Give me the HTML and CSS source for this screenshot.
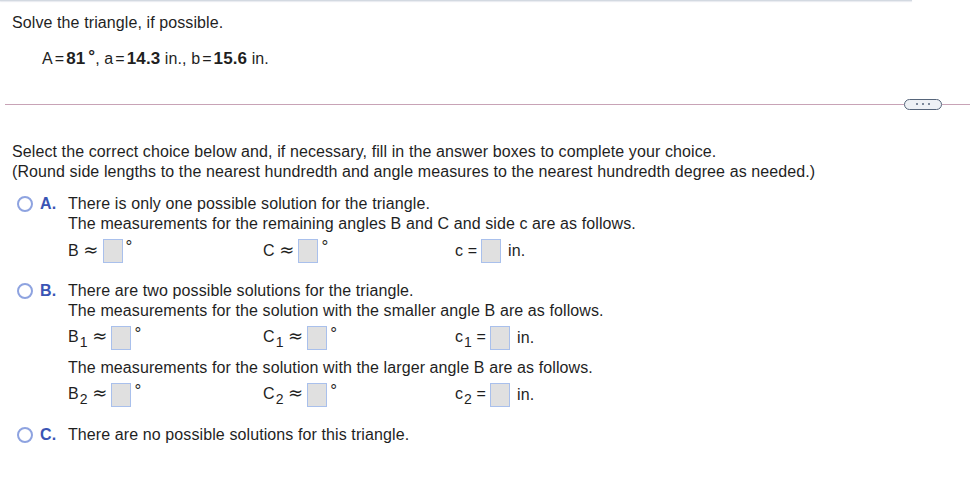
FILE: index.html
```html
<!DOCTYPE html>
<html>
<head>
<meta charset="utf-8">
<link rel="stylesheet" href="styles.css">
</head>
<body>
<div class="page">
  <div class="topline"></div>
  <div class="question">
    <div class="prompt">Solve the triangle, if possible.</div>
    <div class="given">A<span class="eq">=</span><b>81</b><b class="gdeg">°</b>, a<span class="eq">=</span><b>14.3</b> in., b<span class="eq">=</span><b>15.6</b> in.</div>
  </div>
  <div class="divider">
    <div class="rule rule-left"></div>
    <div class="pill"><span class="dot"></span><span class="dot"></span><span class="dot"></span></div>
    <div class="rule rule-right"></div>
  </div>
  <div class="instructions">
    <div>Select the correct choice below and, if necessary, fill in the answer boxes to complete your choice.</div>
    <div>(Round side lengths to the nearest hundredth and angle measures to the nearest hundredth degree as needed.)</div>
  </div>
  <div class="options">
    <div class="option">
      <span class="radio"></span>
      <span class="label">A.</span>
      <div class="body">
        <div>There is only one possible solution for the triangle.</div>
        <div>The measurements for the remaining angles B and C and side c are as follows.</div>
        <div class="answers">
          <div class="cell"><span class="lbl">B <span class="ap">≈</span></span><span class="box"></span><span class="deg">°</span></div>
          <div class="cell"><span class="lbl">C <span class="ap">≈</span></span><span class="box"></span><span class="deg">°</span></div>
          <div class="cell"><span class="lbl">c =</span><span class="box"></span><span class="unit">in.</span></div>
        </div>
      </div>
    </div>
    <div class="option">
      <span class="radio"></span>
      <span class="label">B.</span>
      <div class="body">
        <div>There are two possible solutions for the triangle.</div>
        <div>The measurements for the solution with the smaller angle B are as follows.</div>
        <div class="answers">
          <div class="cell"><span class="lbl">B<sub>1</sub> <span class="ap">≈</span></span><span class="box"></span><span class="deg">°</span></div>
          <div class="cell"><span class="lbl">C<sub>1</sub> <span class="ap">≈</span></span><span class="box"></span><span class="deg">°</span></div>
          <div class="cell"><span class="lbl">c<sub>1</sub> =</span><span class="box"></span><span class="unit">in.</span></div>
        </div>
        <div class="after">The measurements for the solution with the larger angle B are as follows.</div>
        <div class="answers">
          <div class="cell"><span class="lbl">B<sub>2</sub> <span class="ap">≈</span></span><span class="box"></span><span class="deg">°</span></div>
          <div class="cell"><span class="lbl">C<sub>2</sub> <span class="ap">≈</span></span><span class="box"></span><span class="deg">°</span></div>
          <div class="cell"><span class="lbl">c<sub>2</sub> =</span><span class="box"></span><span class="unit">in.</span></div>
        </div>
      </div>
    </div>
    <div class="option">
      <span class="radio"></span>
      <span class="label">C.</span>
      <div class="body">
        <div>There are no possible solutions for this triangle.</div>
      </div>
    </div>
  </div>
</div>
</body>
</html>
```

FILE: styles.css
```css
html, body {
  margin: 0;
  padding: 0;
  background: #ffffff;
}
body {
  font-family: "Liberation Sans", Arial, sans-serif;
  font-size: 16px;
  line-height: 20px;
  letter-spacing: 0.1px;
  color: #1f1f1f;
}
.page {
  width: 970px;
}
.topline {
  width: 912px;
  height: 1px;
  background: #d3d9e1;
  box-shadow: 0 1px 1px rgba(180, 190, 205, 0.35);
}
.question {
  padding: 12px 0 0 12px;
}
.given {
  margin-top: 16px;
  padding-left: 30px;
}
.given b {
  font-weight: bold;
  font-size: 17px;
}
.given .gdeg {
  margin-left: 3px;
  position: relative;
  top: -2px;
}
.eq {
  margin: 0 2px;
}
.divider {
  display: flex;
  align-items: center;
  height: 12px;
  margin-top: 29px;
}
.rule {
  height: 1px;
  background: #c8a3b6;
}
.rule-left {
  margin-left: 5px;
  width: 899px;
}
.rule-right {
  flex: 1;
}
.pill {
  width: 36px;
  height: 9px;
  border: 1.5px solid #56657a;
  border-radius: 7px;
  background: #eef1f5;
  display: flex;
  align-items: center;
  justify-content: center;
  gap: 4px;
}
.dot {
  width: 2px;
  height: 2px;
  background: #56657a;
  border-radius: 1px;
}
.instructions {
  margin-top: 32px;
  padding-left: 12px;
}
.options {
  margin-top: 12px;
}
.option {
  display: flex;
  align-items: flex-start;
  padding-left: 17px;
  margin-bottom: 18px;
}
.radio {
  width: 12px;
  height: 12px;
  border: 2px solid #8ea3e0;
  border-radius: 50%;
  margin-top: 2px;
  margin-right: 7px;
  flex: none;
}
.label {
  width: 28px;
  flex: none;
  font-weight: bold;
  color: #3a54b4;
}
.answers {
  display: grid;
  grid-template-columns: 195px 192px auto;
  margin-top: 4px;
  height: 25px;
  align-items: center;
}
.cell {
  display: flex;
  align-items: center;
}
.lbl {
  white-space: pre;
}
.lbl sub {
  font-size: 14px;
  line-height: 1;
  vertical-align: -5px;
  margin-left: 1px;
}
.ap {
  font-family: "DejaVu Sans", sans-serif;
  font-size: 18px;
  line-height: 18px;
}
.box {
  display: inline-block;
  width: 18px;
  height: 22px;
  background: #e0e0e0;
  border: 1px solid #a9c0ec;
  margin-left: 4px;
}
.deg {
  align-self: flex-start;
  font-size: 17px;
  line-height: 15px;
  margin-left: 3px;
}
.unit {
  margin-left: 7px;
}
.after {
  margin-top: 8px;
}
```
